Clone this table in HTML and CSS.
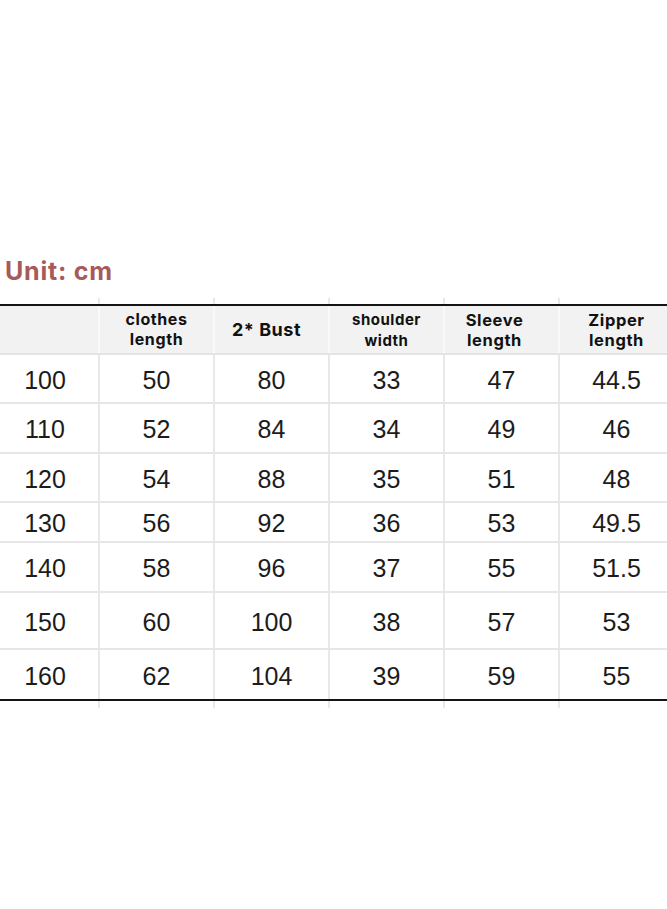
FILE: index.html
```html
<!DOCTYPE html>
<html>
<head>
<meta charset="utf-8">
<link rel="stylesheet" href="styles.css">
</head>
<body>
<div class="page">
  <div class="unit">Unit: cm</div>
  <div class="table">
    <div class="row spacer-top">
      <div class="cell first"></div><div class="cell"></div><div class="cell"></div><div class="cell"></div><div class="cell"></div><div class="cell"></div>
    </div>
    <div class="row head">
      <div class="cell first"></div>
      <div class="cell"><span class="h h16">clothes<br>length</span></div>
      <div class="cell"><span class="h h18 shift-l">2* Bust</span></div>
      <div class="cell"><span class="h h15">shoulder<br>width</span></div>
      <div class="cell"><span class="h h17 shift-l2">Sleeve<br>length</span></div>
      <div class="cell"><span class="h h17">Zipper<br>length</span></div>
    </div>
    <div class="row r49"><div class="cell first">100</div><div class="cell">50</div><div class="cell">80</div><div class="cell">33</div><div class="cell">47</div><div class="cell">44.5</div></div>
    <div class="row r50"><div class="cell first">110</div><div class="cell">52</div><div class="cell">84</div><div class="cell">34</div><div class="cell">49</div><div class="cell">46</div></div>
    <div class="row r49"><div class="cell first">120</div><div class="cell">54</div><div class="cell">88</div><div class="cell">35</div><div class="cell">51</div><div class="cell">48</div></div>
    <div class="row r40"><div class="cell first">130</div><div class="cell">56</div><div class="cell">92</div><div class="cell">36</div><div class="cell">53</div><div class="cell">49.5</div></div>
    <div class="row r50"><div class="cell first">140</div><div class="cell">58</div><div class="cell">96</div><div class="cell">37</div><div class="cell">55</div><div class="cell">51.5</div></div>
    <div class="row r57"><div class="cell first">150</div><div class="cell">60</div><div class="cell">100</div><div class="cell">38</div><div class="cell">57</div><div class="cell">53</div></div>
    <div class="row r50 last"><div class="cell first">160</div><div class="cell">62</div><div class="cell">104</div><div class="cell">39</div><div class="cell">59</div><div class="cell">55</div></div>
    <div class="row spacer-bottom">
      <div class="cell first"></div><div class="cell"></div><div class="cell"></div><div class="cell"></div><div class="cell"></div><div class="cell"></div>
    </div>
  </div>
</div>
</body>
</html>
```

FILE: styles.css
```css
html, body {
  margin: 0;
  padding: 0;
  background: #ffffff;
}
.page {
  width: 667px;
  height: 909px;
  overflow: hidden;
  padding-top: 256px;
  box-sizing: border-box;
}
.unit {
  font-family: Inter, "Liberation Sans", sans-serif;
  font-weight: 700;
  font-size: 25px;
  line-height: 30px;
  color: #a65a5a;
  padding-left: 5px;
  letter-spacing: 0.8px;
  height: 42px;
}
.table {
  margin-left: -8px;
  width: 683px;
  font-family: "Liberation Sans", Arial, sans-serif;
  font-size: 25px;
  color: #1c1c1c;
}
.row {
  display: flex;
  box-sizing: border-box;
  border-bottom: 2px solid #e6e6e6;
}
.cell {
  width: 115px;
  flex: none;
  box-sizing: border-box;
  border-right: 2px solid #e8e8e8;
  display: flex;
  align-items: center;
  justify-content: center;
  padding-top: 3px;
}
.cell.first {
  width: 108px;
}
.spacer-top {
  height: 6px;
  border-bottom: none;
}
.spacer-bottom {
  height: 7px;
  border-bottom: none;
}
.head {
  height: 51px;
  border-top: 2px solid #141414;
  background: #f2f2f2;
  border-bottom: 2px solid #e4e4e4;
}
.head .cell {
  border-right-color: #f9f9f9;
  padding-top: 0;
}
.h {
  font-family: Inter, "Liberation Sans", sans-serif;
  font-weight: 700;
  color: #111;
  text-align: center;
}
.h16 { font-size: 16px; line-height: 19.5px; letter-spacing: 0.6px; }
.h18 { font-size: 18px; line-height: 22px; letter-spacing: 0.5px; }
.h15 { font-size: 15px; line-height: 21px; letter-spacing: 0.5px; }
.h17 { font-size: 16.5px; line-height: 20px; letter-spacing: 0.6px; }
.shift-l { margin-right: 10px; }
.shift-l2 { margin-right: 14px; }
.r49 { height: 49px; }
.r50 { height: 50px; }
.r40 { height: 40px; }
.r57 { height: 57px; }
.last {
  height: 51px;
  border-bottom: 2px solid #141414;
}
```
